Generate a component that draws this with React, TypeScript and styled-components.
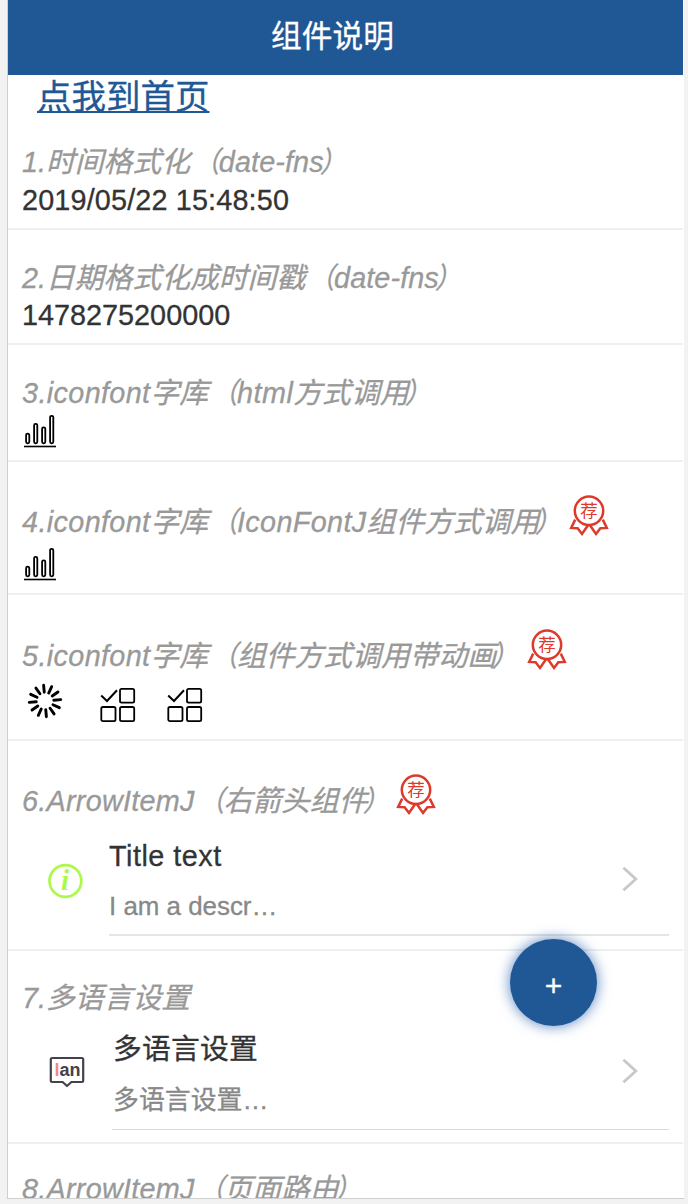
import React from "react";
import styled, { createGlobalStyle } from "styled-components";

const GlobalStyle = createGlobalStyle`
  * { box-sizing: border-box; }
  body {
    margin: 0;
    background: #f2f2f2;
    font-family: "Liberation Sans", "Noto Sans CJK SC", sans-serif;
    color: #333;
    -webkit-text-stroke: 0.3px currentColor;
  }
  svg { display: block; flex: none; }
  svg text { -webkit-text-stroke: 0; }
`;

const Stage = styled.div`
  height: 1204px;
  padding: 0 4px 5px 7px;
  overflow: hidden;
`;

const Phone = styled.main`
  position: relative;
  height: 1199px;
  background: #fff;
  border-left: 1px solid #cfcfcf;
  border-bottom: 1px solid #cfcfcf;
  overflow: hidden;
`;

const Header = styled.header`
  height: 75px;
  margin-right: 1px;
  padding: 0 26px 8px 0;
  display: flex;
  align-items: center;
  justify-content: center;
  background: #205895;
  color: #fff;
  font-size: 30.7px;
`;

const HomeLink = styled.a`
  display: block;
  width: max-content;
  height: 43px;
  margin-left: 29px;
  line-height: 45px;
  font-size: 34.5px;
  color: #205895;
  text-decoration: underline;
  text-decoration-thickness: 2px;
  text-underline-offset: 2px;
  text-decoration-skip-ink: none;
`;

const Section = styled.section<{ $height: number; $top: number }>`
  height: ${(p) => p.$height}px;
  padding-top: ${(p) => p.$top}px;
  padding-left: 14px;
  margin-right: 1px;
  border-bottom: 2px solid #efefef;
`;

const Heading = styled.h2`
  margin: 0;
  height: 38px;
  display: flex;
  align-items: center;
  font-size: 28.8px;
  font-weight: 400;
  font-style: italic;
  line-height: 38px;
  color: #999;
  white-space: nowrap;
`;

const Latin = styled.span<{ $spacing?: number }>`
  letter-spacing: ${(p) => p.$spacing ?? 0.36}px;
`;

const Paren = styled.span<{ $shift: number }>`
  display: inline-block;
  transform: translateX(${(p) => p.$shift}px) scaleX(0.9);
`;

const BadgeSlot = styled.span<{ $gap: number }>`
  margin-left: ${(p) => p.$gap}px;
  margin-bottom: 13px;
`;

const Value = styled.div<{ $spacing?: number; $lift?: number }>`
  height: 38px;
  line-height: ${(p) => 38 - 2 * (p.$lift ?? 0)}px;
  font-size: 28.8px;
  letter-spacing: ${(p) => p.$spacing ?? 0}px;
`;

const IconRow = styled.div<{ $top: number; $left: number }>`
  display: flex;
  padding: ${(p) => p.$top}px 0 0 ${(p) => p.$left}px;
`;

const GridIcons = styled.div`
  display: flex;
  gap: 30.9px;
  margin: 5px 0 0 36.7px;
`;

const Item = styled.div<{ $left: number; $height: number }>`
  display: flex;
  align-items: center;
  height: ${(p) => p.$height}px;
  padding-left: ${(p) => p.$left}px;
`;

const ItemIcon = styled.span<{ $top?: number; $bottom?: number }>`
  padding-top: ${(p) => p.$top ?? 0}px;
  padding-bottom: ${(p) => p.$bottom ?? 0}px;
`;

const ItemBody = styled.div<{ $gap: number; $line: string }>`
  flex: 1;
  align-self: stretch;
  display: flex;
  align-items: center;
  justify-content: space-between;
  margin: 0 14px 0 ${(p) => p.$gap}px;
  padding-right: 31px;
  border-bottom: ${(p) => p.$line};
`;

const ItemText = styled.div<{ $indent: number }>`
  align-self: flex-start;
  padding-left: ${(p) => p.$indent}px;
`;

const ItemTitle = styled.div<{ $top: number; $spacing?: number }>`
  margin-top: ${(p) => p.$top}px;
  height: 40px;
  line-height: 40px;
  font-size: 28.8px;
  letter-spacing: ${(p) => p.$spacing ?? 0}px;
`;

const ItemDesc = styled.div<{ $gap: number }>`
  margin-top: ${(p) => p.$gap}px;
  height: 40px;
  line-height: 40px;
  font-size: 25.9px;
  color: #888;
`;

const Fab = styled.button`
  position: absolute;
  left: 502px;
  top: 939px;
  width: 87px;
  height: 87px;
  padding: 7px 0 0;
  border: 0;
  border-radius: 50%;
  background: #205895;
  box-shadow: 0 0 14px rgba(32, 88, 170, 0.75);
  color: #fff;
  font: 30px/1 "Liberation Sans", sans-serif;
  -webkit-text-stroke: 0.3px #fff;
`;

const BarsIcon = () => (
  <svg width="33" height="34" viewBox="0 0 33 34" fill="none" stroke="#000" strokeWidth="1.8">
    <rect x="2.1" y="19.7" width="3.2" height="9.6" rx="1.5" />
    <rect x="10.1" y="9.9" width="3.2" height="19.4" rx="1.5" />
    <rect x="18.1" y="13.3" width="3.2" height="16" rx="1.5" />
    <rect x="26.1" y="1.8" width="3.2" height="27.5" rx="1.5" />
    <path d="M0 32.5h32" strokeWidth="1.6" />
  </svg>
);

const SpinnerIcon = () => (
  <svg width="36" height="36" viewBox="-18 -18 36 36" stroke="#000" strokeWidth="2.9" strokeLinecap="round">
    {Array.from({ length: 12 }, (_, i) => (
      <path key={i} d="M0-8.8V-15.8" transform={`rotate(${i * 30 - 5})`} />
    ))}
  </svg>
);

const CheckGridIcon = () => (
  <svg width="36" height="35" viewBox="0 0 36 35" fill="none" stroke="#000" strokeWidth="1.8">
    <path d="M1.2 7.5 7 13 17 2.2" strokeWidth="2" />
    <rect x="20" y="0.9" width="14.2" height="13.8" rx="1.6" />
    <rect x="1.3" y="19" width="14.2" height="14.2" rx="1.6" />
    <rect x="20" y="19" width="14.2" height="14.2" rx="1.6" />
  </svg>
);

const BadgeIcon = () => (
  <svg width="40" height="42" viewBox="0 0 40 42" fill="none" stroke="#dc3a2b" strokeWidth="2.5">
    <circle cx="20" cy="15.8" r="14.2" />
    <path d="M6.2 24.6 2.2 32.9 8.6 33.3 13 39 19.2 30" />
    <path d="M33.8 24.6 37.8 32.9 31.4 33.3 27 39 20.8 30" />
    <text
      x="20"
      y="22.2"
      textAnchor="middle"
      fontSize="17.5"
      fontStyle="normal"
      fontFamily="Noto Sans CJK SC, sans-serif"
      fill="#dc3a2b"
      stroke="none"
    >
      荐
    </text>
  </svg>
);

const InfoIcon = () => (
  <svg width="36" height="36" viewBox="0 0 36 36">
    <circle cx="18.4" cy="18" r="15.9" fill="none" stroke="#adf84c" strokeWidth="2.7" />
    <text
      x="18"
      y="27.4"
      textAnchor="middle"
      fontFamily="Liberation Serif, serif"
      fontStyle="italic"
      fontWeight="700"
      fontSize="29"
      fill="#adf84c"
    >
      i
    </text>
  </svg>
);

const LanIcon = () => (
  <svg width="36" height="32" viewBox="0 0 36 32">
    <path
      d="M3.2 2H32.8Q34.2 2 34.2 3.4V24.6Q34.2 26 32.8 26H22.4L18 30 13.6 26H3.2Q1.8 26 1.8 24.6V3.4Q1.8 2 3.2 2Z"
      fill="none"
      stroke="#45414a"
      strokeWidth="2.2"
      strokeLinejoin="round"
    />
    <text x="5.4" y="20" fontFamily="Liberation Sans, sans-serif" fontSize="18" fontWeight="700" fill="#45414a">
      <tspan fill="#ee8a84">l</tspan>
      <tspan>an</tspan>
    </text>
  </svg>
);

const Chevron = () => (
  <svg width="16" height="26" viewBox="0 0 16 26" fill="none" stroke="#c7c7cc" strokeWidth="2.8">
    <path d="M1.4 1.8 13.8 13 1.4 24.2" />
  </svg>
);

const Open = () => <Paren $shift={2}>（</Paren>;
const Close = () => <Paren $shift={-5.5}>）</Paren>;

export default function App() {
  return (
    <Stage>
      <GlobalStyle />
      <Phone>
        <Header>组件说明</Header>
        <HomeLink>点我到首页</HomeLink>
        <Section $height={112} $top={25}>
          <Heading>1.时间格式化<Open /><Latin $spacing={0.1}>date-fns</Latin><Close /></Heading>
          <Value $spacing={0.15}>2019/05/22 15:48:50</Value>
        </Section>
        <Section $height={115} $top={29}>
          <Heading>2.日期格式化成时间戳<Open /><Latin $spacing={0.1}>date-fns</Latin><Close /></Heading>
          <Value $lift={1}>1478275200000</Value>
        </Section>
        <Section $height={117} $top={29}>
          <Heading><Latin>3.iconfont</Latin>字库<Open /><Latin $spacing={0.5}>html</Latin>方式调用<Close /></Heading>
          <IconRow $top={2} $left={2}>
            <BarsIcon />
          </IconRow>
        </Section>
        <Section $height={133} $top={41}>
          <Heading>
            <Latin>4.iconfont</Latin>字库<Open /><Latin>IconFontJ</Latin>组件方式调用<Close />
            <BadgeSlot $gap={1}><BadgeIcon /></BadgeSlot>
          </Heading>
          <IconRow $top={6} $left={2}>
            <BarsIcon />
          </IconRow>
        </Section>
        <Section $height={146} $top={42}>
          <Heading>
            <Latin>5.iconfont</Latin>字库<Open />组件方式调用带动画<Close />
            <BadgeSlot $gap={2}><BadgeIcon /></BadgeSlot>
          </Heading>
          <IconRow $top={8} $left={5}>
            <SpinnerIcon />
            <GridIcons>
              <CheckGridIcon />
              <CheckGridIcon />
            </GridIcons>
          </IconRow>
        </Section>
        <Section $height={210} $top={41}>
          <Heading>
            <Latin $spacing={0.25}>6.ArrowItemJ</Latin><Open />右箭头组件<Close />
            <BadgeSlot $gap={0}><BadgeIcon /></BadgeSlot>
          </Heading>
          <Item $left={25} $height={116}>
            <ItemIcon $top={5}><InfoIcon /></ItemIcon>
            <ItemBody $gap={26} $line="2px solid #e5e5e5">
              <ItemText $indent={0}>
                <ItemTitle $top={16} $spacing={0.5}>Title text</ItemTitle>
                <ItemDesc $gap={10}>I am a descr…</ItemDesc>
              </ItemText>
              <ItemIcon $top={3}><Chevron /></ItemIcon>
            </ItemBody>
          </Item>
        </Section>
        <Section $height={193} $top={28}>
          <Heading>7.多语言设置</Heading>
          <Item $left={27} $height={113}>
            <ItemIcon $bottom={4}><LanIcon /></ItemIcon>
            <ItemBody $gap={27} $line="1px solid #d9d9d9">
              <ItemText $indent={1}>
                <ItemTitle $top={12} $spacing={0.2}>多语言设置</ItemTitle>
                <ItemDesc $gap={11}>多语言设置…</ItemDesc>
              </ItemText>
              <ItemIcon $bottom={4}><Chevron /></ItemIcon>
            </ItemBody>
          </Item>
        </Section>
        <Section $height={100} $top={26}>
          <Heading><Latin $spacing={0.25}>8.ArrowItemJ</Latin><Open />页面路由<Close /></Heading>
        </Section>
        <Fab>+</Fab>
      </Phone>
    </Stage>
  );
}
